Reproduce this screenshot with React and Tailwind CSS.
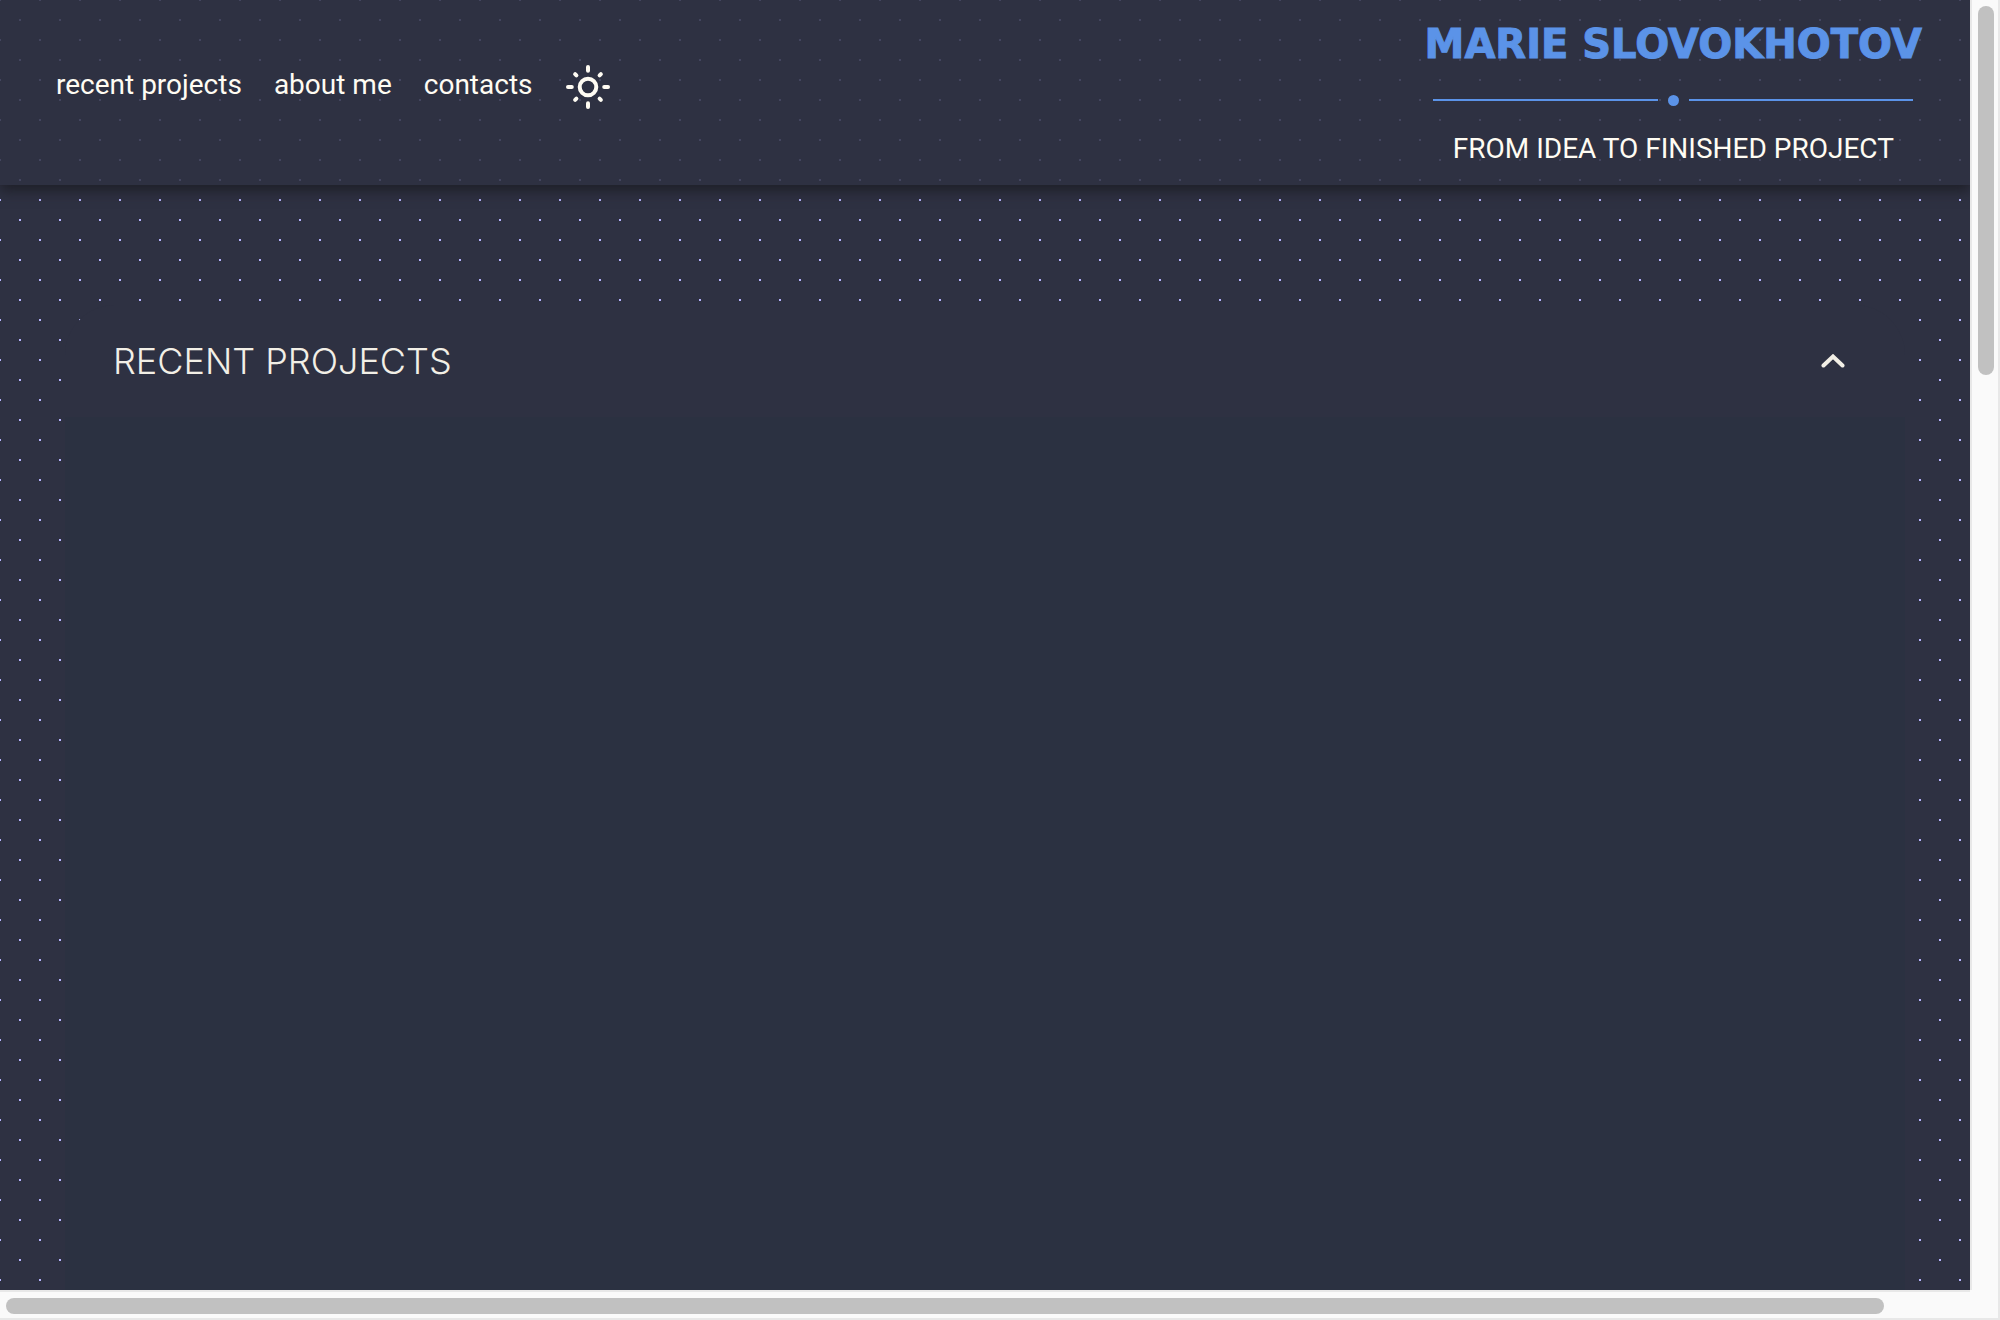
const rays = [0, 45, 90, 135, 180, 225, 270, 315];

function SunIcon() {
  return (
    <svg viewBox="0 0 46 46" className="size-[46px]" fill="none" stroke="currentColor" strokeWidth="4" strokeLinecap="round" aria-hidden="true">
      <circle cx="23" cy="23" r="8.3" />
      {rays.map((a) => (
        <path key={a} d={a % 90 ? "M23 6.6V4.8" : "M23 6.8V3"} transform={`rotate(${a} 23 23)`} />
      ))}
    </svg>
  );
}

function NavLink({ href, children }) {
  return (
    <a href={href} className="pb-1 text-[28px] leading-8">
      {children}
    </a>
  );
}

function Header() {
  return (
    <header className="flex items-start justify-between bg-[#2e3142]/85 pr-12 pl-14 shadow-[0_6px_12px_#1f2029]">
      <nav className="mt-16 flex items-center gap-8">
        <NavLink href="#projects">recent projects</NavLink>
        <NavLink href="#about">about me</NavLink>
        <NavLink href="#contacts">contacts</NavLink>
        <button type="button" aria-label="Switch to light theme">
          <SunIcon />
        </button>
      </nav>
      <div className="flex flex-col items-center pt-[21px] pb-5">
        <h1 className="font-['DejaVu_Sans',sans-serif] text-[40px] leading-[46px] font-bold text-[#5b93e8] [-webkit-text-stroke:1px_#5b93e8]">MARIE SLOVOKHOTOV</h1>
        <div className="mt-[27px] mb-[27px] flex h-3 w-[480px] items-center gap-[10px] text-[#5b93e8]">
          <span className="h-0.5 flex-1 bg-current" />
          <span className="size-[11px] rounded-full bg-current" />
          <span className="h-0.5 flex-1 bg-current" />
        </div>
        <p className="text-[28px] leading-8">FROM IDEA TO FINISHED PROJECT</p>
      </div>
    </header>
  );
}

function Projects() {
  return (
    <section id="projects" className="mx-[65px] mt-[120px] flex flex-1 flex-col overflow-hidden rounded-t-[50px] bg-[#2e3142]">
      <h2>
        <button type="button" aria-expanded="true" className="flex h-[112px] w-full items-center justify-between pr-[60px] pl-12 text-left text-[#f2efe6]">
          <span className="font-[Inter,sans-serif] text-[36px] font-light">RECENT PROJECTS</span>
          <svg viewBox="0 0 24 14" className="h-[14px] w-6" fill="none" stroke="currentColor" strokeWidth="4" strokeLinecap="round" aria-hidden="true">
            <path d="M2.5 11.5L12 2.5L21.5 11.5" />
          </svg>
        </button>
      </h2>
      <div className="flex-1 bg-[#2b3141]" />
    </section>
  );
}

export default function App() {
  return (
    <div className="grid h-screen grid-cols-[1fr_30px] grid-rows-[1fr_30px] bg-[#fafafa] font-[Roboto,sans-serif] text-[#fffcf3]">
      <main className="flex flex-col overflow-hidden bg-[#2e3142] bg-[image:conic-gradient(from_270deg_at_2px_2px,#b8b5ff_90deg,transparent_90deg),conic-gradient(from_270deg_at_2px_2px,#b8b5ff_90deg,transparent_90deg)] bg-[size:40px_40px] bg-[position:-1px_-1px,19px_19px]">
        <Header />
        <Projects />
      </main>
      <div className="flex justify-center border-r-2 border-l-2 border-[#e8e8e8] pt-1.5 pl-0.5">
        <div className="h-[369px] max-h-[96%] w-4 rounded-full bg-[#c1c1c1]" />
      </div>
      <div className="flex items-center border-t-2 border-b-2 border-[#e8e8e8] pt-0.5 pl-1.5">
        <div className="h-4 w-[1878px] max-w-[96%] rounded-full bg-[#c1c1c1]" />
      </div>
      <div className="border-r-2 border-b-2 border-[#e8e8e8]" />
    </div>
  );
}
